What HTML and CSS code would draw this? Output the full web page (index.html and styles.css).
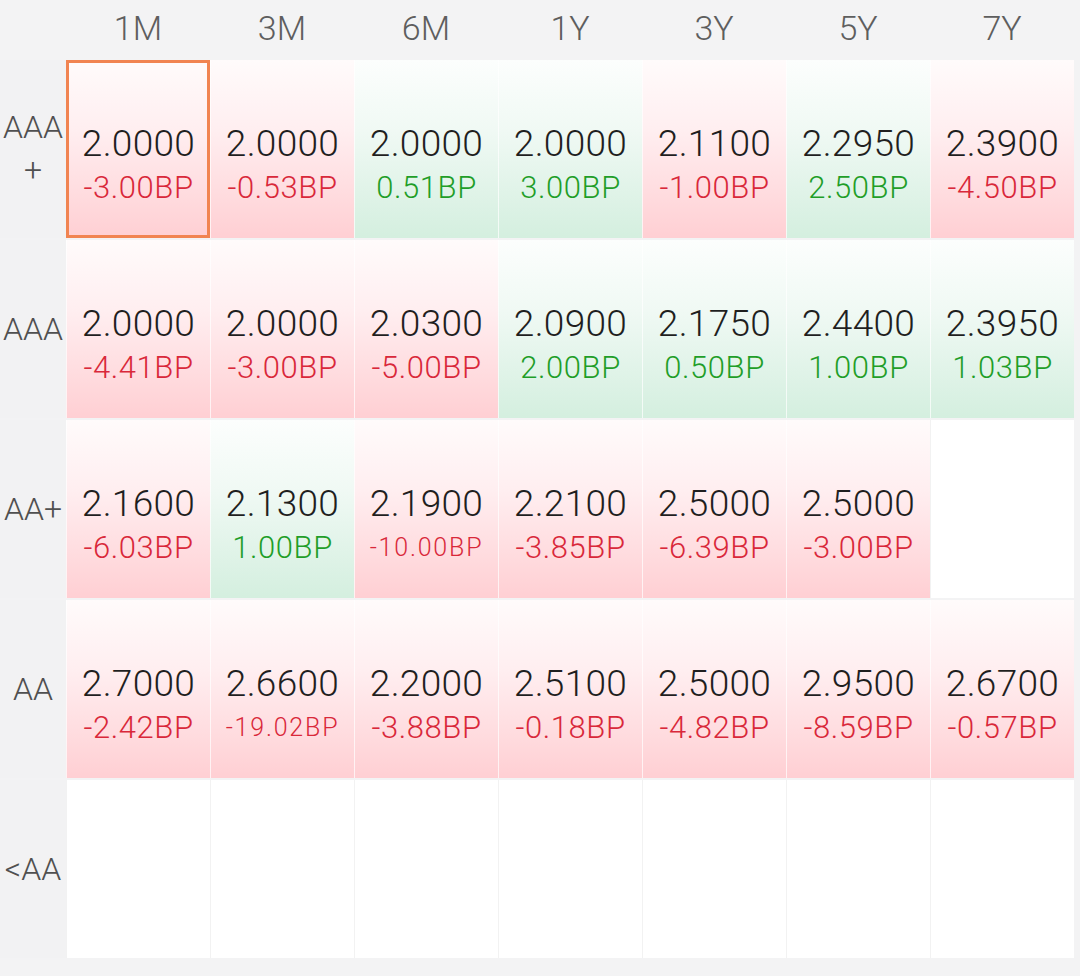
FILE: index.html
```html
<!DOCTYPE html>
<html>
<head>
<meta charset="utf-8">
<link rel="stylesheet" href="styles.css">
</head>
<body>
<div class="table">
  <div class="corner"></div>
  <div class="hd">1M</div><div class="hd">3M</div><div class="hd">6M</div><div class="hd">1Y</div><div class="hd">3Y</div><div class="hd">5Y</div><div class="hd">7Y</div>

  <div class="lbl">AAA+</div>
  <div class="cell down selected"><span class="v">2.0000</span><span class="d">-3.00BP</span></div>
  <div class="cell down"><span class="v">2.0000</span><span class="d">-0.53BP</span></div>
  <div class="cell up"><span class="v">2.0000</span><span class="d">0.51BP</span></div>
  <div class="cell up"><span class="v">2.0000</span><span class="d">3.00BP</span></div>
  <div class="cell down"><span class="v">2.1100</span><span class="d">-1.00BP</span></div>
  <div class="cell up"><span class="v">2.2950</span><span class="d">2.50BP</span></div>
  <div class="cell down"><span class="v">2.3900</span><span class="d">-4.50BP</span></div>

  <div class="lbl">AAA</div>
  <div class="cell down"><span class="v">2.0000</span><span class="d">-4.41BP</span></div>
  <div class="cell down"><span class="v">2.0000</span><span class="d">-3.00BP</span></div>
  <div class="cell down"><span class="v">2.0300</span><span class="d">-5.00BP</span></div>
  <div class="cell up"><span class="v">2.0900</span><span class="d">2.00BP</span></div>
  <div class="cell up"><span class="v">2.1750</span><span class="d">0.50BP</span></div>
  <div class="cell up"><span class="v">2.4400</span><span class="d">1.00BP</span></div>
  <div class="cell up"><span class="v">2.3950</span><span class="d">1.03BP</span></div>

  <div class="lbl">AA+</div>
  <div class="cell down"><span class="v">2.1600</span><span class="d">-6.03BP</span></div>
  <div class="cell up"><span class="v">2.1300</span><span class="d">1.00BP</span></div>
  <div class="cell down"><span class="v">2.1900</span><span class="d small">-10.00BP</span></div>
  <div class="cell down"><span class="v">2.2100</span><span class="d">-3.85BP</span></div>
  <div class="cell down"><span class="v">2.5000</span><span class="d">-6.39BP</span></div>
  <div class="cell down"><span class="v">2.5000</span><span class="d">-3.00BP</span></div>
  <div class="cell empty"></div>

  <div class="lbl">AA</div>
  <div class="cell down"><span class="v">2.7000</span><span class="d">-2.42BP</span></div>
  <div class="cell down"><span class="v">2.6600</span><span class="d small">-19.02BP</span></div>
  <div class="cell down"><span class="v">2.2000</span><span class="d">-3.88BP</span></div>
  <div class="cell down"><span class="v">2.5100</span><span class="d">-0.18BP</span></div>
  <div class="cell down"><span class="v">2.5000</span><span class="d">-4.82BP</span></div>
  <div class="cell down"><span class="v">2.9500</span><span class="d">-8.59BP</span></div>
  <div class="cell down"><span class="v">2.6700</span><span class="d">-0.57BP</span></div>

  <div class="lbl">&lt;AA</div>
  <div class="cell empty"></div>
  <div class="cell empty"></div>
  <div class="cell empty"></div>
  <div class="cell empty"></div>
  <div class="cell empty"></div>
  <div class="cell empty"></div>
  <div class="cell empty"></div>
</div>
</body>
</html>
```

FILE: styles.css
```css
html, body {
  margin: 0;
  padding: 0;
  background: #f3f3f4;
  font-family: Roboto, "Noto Sans", "Liberation Sans", sans-serif;
}
body {
  width: 1080px;
  height: 976px;
  overflow: hidden;
}
.table {
  display: grid;
  grid-template-columns: 66px repeat(7, 144px);
  grid-template-rows: 58px repeat(5, 178px);
  row-gap: 2px;
  padding-bottom: 20px;
}
.corner {
  background: #f3f3f4;
}
.hd {
  display: flex;
  align-items: center;
  justify-content: center;
  font-size: 34px;
  font-weight: 300;
  color: #5e5e5e;
  padding-bottom: 3px;
  background: #f3f3f4;
}
.lbl {
  display: flex;
  align-items: center;
  justify-content: center;
  text-align: center;
  font-size: 32px;
  font-weight: 300;
  line-height: 43px;
  color: #505050;
  background: #f2f2f3;
  word-break: break-all;
  padding: 0;
}
.cell {
  display: flex;
  flex-direction: column;
  align-items: center;
  justify-content: center;
  padding-top: 34px;
  box-sizing: border-box;
  background: #fff;
  border-left: 1px solid rgba(255,255,255,0.7);
  position: relative;
}
.cell.empty {
  background: #fff;
  border-left: 1px solid #f2f2f2;
}
.cell.down {
  background: linear-gradient(to bottom, #fffbfb 0%, #ffeef0 40%, #ffcfd3 100%);
}
.cell.up {
  background: linear-gradient(to bottom, #fcfefd 0%, #f0f9f4 40%, #d4efdf 100%);
}
.cell.selected {
  outline: 3px solid #f18451;
  outline-offset: -3px;
}
.v {
  font-size: 37px;
  font-weight: 300;
  line-height: 44px;
  color: #1f1f1f;
  letter-spacing: 0.3px;
}
.d {
  font-size: 31px;
  font-weight: 300;
  line-height: 44px;
  letter-spacing: 0.6px;
}
.d.small {
  font-size: 25px;
  letter-spacing: 1.8px;
}
.down .d { color: #d9283a; }
.up .d { color: #1f9e28; }
```
